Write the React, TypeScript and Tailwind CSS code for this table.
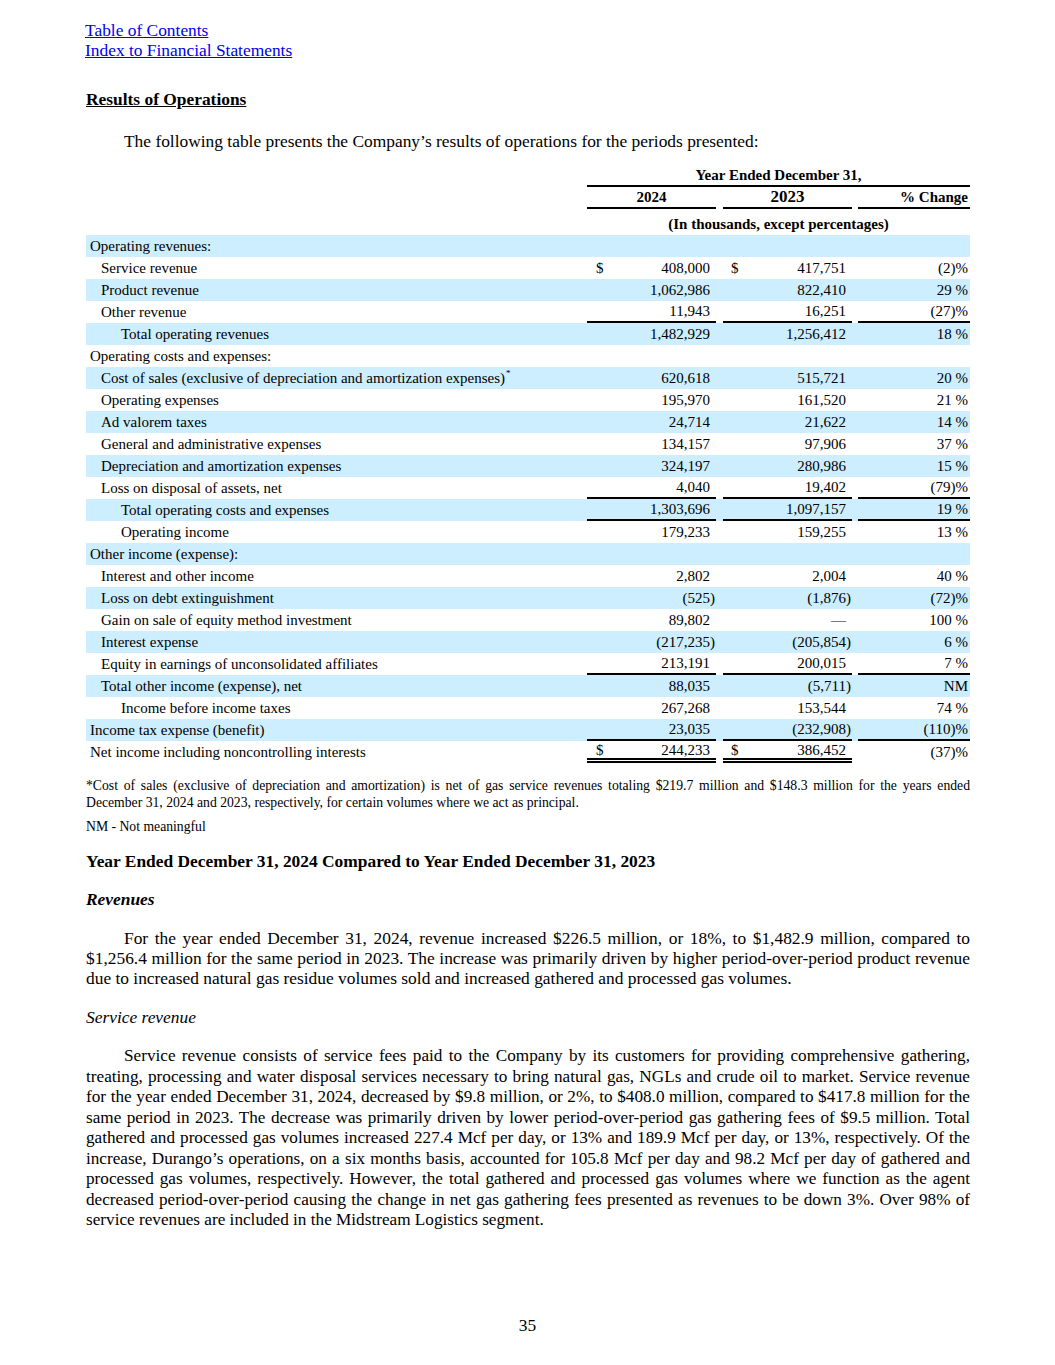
type Row = {
  label: string;
  lvl: 0 | 1 | 2;
  a?: string;
  b?: string;
  c?: string;
  dollar?: boolean;
  sup?: boolean;
  line?: boolean;
  double?: boolean;
};

const rows: Row[] = [
  { label: "Operating revenues:", lvl: 0 },
  { label: "Service revenue", lvl: 1, a: "408,000", b: "417,751", c: "(2)%", dollar: true },
  { label: "Product revenue", lvl: 1, a: "1,062,986", b: "822,410", c: "29 %" },
  { label: "Other revenue", lvl: 1, a: "11,943", b: "16,251", c: "(27)%", line: true },
  { label: "Total operating revenues", lvl: 2, a: "1,482,929", b: "1,256,412", c: "18 %" },
  { label: "Operating costs and expenses:", lvl: 0 },
  { label: "Cost of sales (exclusive of depreciation and amortization expenses)", lvl: 1, sup: true, a: "620,618", b: "515,721", c: "20 %" },
  { label: "Operating expenses", lvl: 1, a: "195,970", b: "161,520", c: "21 %" },
  { label: "Ad valorem taxes", lvl: 1, a: "24,714", b: "21,622", c: "14 %" },
  { label: "General and administrative expenses", lvl: 1, a: "134,157", b: "97,906", c: "37 %" },
  { label: "Depreciation and amortization expenses", lvl: 1, a: "324,197", b: "280,986", c: "15 %" },
  { label: "Loss on disposal of assets, net", lvl: 1, a: "4,040", b: "19,402", c: "(79)%", line: true },
  { label: "Total operating costs and expenses", lvl: 2, a: "1,303,696", b: "1,097,157", c: "19 %", line: true },
  { label: "Operating income", lvl: 2, a: "179,233", b: "159,255", c: "13 %" },
  { label: "Other income (expense):", lvl: 0 },
  { label: "Interest and other income", lvl: 1, a: "2,802", b: "2,004", c: "40 %" },
  { label: "Loss on debt extinguishment", lvl: 1, a: "(525)", b: "(1,876)", c: "(72)%" },
  { label: "Gain on sale of equity method investment", lvl: 1, a: "89,802", b: "—", c: "100 %" },
  { label: "Interest expense", lvl: 1, a: "(217,235)", b: "(205,854)", c: "6 %" },
  { label: "Equity in earnings of unconsolidated affiliates", lvl: 1, a: "213,191", b: "200,015", c: "7 %", line: true },
  { label: "Total other income (expense), net", lvl: 1, a: "88,035", b: "(5,711)", c: "NM" },
  { label: "Income before income taxes", lvl: 2, a: "267,268", b: "153,544", c: "74 %" },
  { label: "Income tax expense (benefit)", lvl: 0, a: "23,035", b: "(232,908)", c: "(110)%", line: true },
  { label: "Net income including noncontrolling interests", lvl: 0, a: "244,233", b: "386,452", c: "(37)%", dollar: true, double: true },
];

const indent = ["pl-[4px]", "pl-[15px]", "pl-[35px]"];

function Money({ v, dollar, pad, line, double }: { v?: string; dollar?: boolean; pad: string; line?: boolean; double?: boolean }) {
  const paren = v && v.endsWith(")");
  const num = v ? (paren ? v.slice(0, -1) : v) : "";
  const border = double ? "border-b-[5px] border-double border-black" : line ? "border-b-2 border-black" : "";
  return (
    <div className={`flex items-center justify-between h-[22px] ${pad} ${border}`}>
      <span>{dollar ? "$" : ""}</span>
      <span className="flex">
        <span>{num}</span>
        <span className="w-[6px]">{paren ? ")" : ""}</span>
      </span>
    </div>
  );
}

export default function App() {
  return (
    <div className="w-[1055px] h-[1365px] bg-white text-black px-[85px] pt-[20px] font-['Liberation_Serif',serif]">
      <div className="text-[17.4px] leading-[20px] text-[#0000ee] underline">
        <div>Table of Contents</div>
        <div>Index to Financial Statements</div>
      </div>
      <div className="mt-[29px] pl-[1px] text-[17.4px] leading-[20px] font-bold underline">Results of Operations</div>
      <p className="mt-[22px] pl-[39px] text-[17.4px] leading-[20px]">
        The following table presents the Company’s results of operations for the periods presented:
      </p>

      <div className="mt-[14px] pl-[1px] text-[15px]">
        <div className="grid grid-cols-[501px_383px]">
          <div />
          <div className="h-[22px] pt-[1px] border-b-2 border-black text-center font-bold leading-[19px]">Year Ended December 31,</div>
        </div>
        <div className="grid grid-cols-[501px_129px_7px_129px_6px_112px] font-bold">
          <div />
          <div className="h-[22px] border-b-2 border-black text-center leading-[20px]">2024</div>
          <div />
          <div className="h-[22px] border-b-2 border-black text-center text-[17px] leading-[20px]">2023</div>
          <div />
          <div className="h-[22px] border-b-2 border-black text-right pr-[2px] leading-[20px]">% Change</div>
        </div>
        <div className="grid grid-cols-[501px_383px] h-[26px]">
          <div />
          <div className="pt-[5px] text-center font-bold leading-[20px]">(In thousands, except percentages)</div>
        </div>

        {rows.map((r, i) => (
          <div
            key={r.label}
            className={`grid grid-cols-[501px_129px_7px_129px_6px_112px] leading-[20px] ${r.double ? "h-[27px]" : "h-[22px]"} ${i % 2 === 0 ? "bg-[#cceeff]" : ""}`}
          >
            <div className={`flex items-center h-[22px] ${indent[r.lvl]}`}>
              {r.label}
              {r.sup && <sup className="text-[9px] -top-[5px] ml-[1px]">*</sup>}
            </div>
            {r.a !== undefined ? (
              <>
                <Money v={r.a} dollar={r.dollar} pad="pl-[9px]" line={r.line} double={r.double} />
                <div />
                <Money v={r.b} dollar={r.dollar} pad="pl-[8px]" line={r.line} double={r.double} />
                <div />
                <div className={`flex items-center justify-end pr-[2px] h-[22px] ${r.line ? "border-b-2 border-black" : ""}`}>{r.c}</div>
              </>
            ) : null}
          </div>
        ))}
      </div>

      <p className="mt-[9px] pl-[1px] text-[13.7px] leading-[17px] text-justify">
        *Cost of sales (exclusive of depreciation and amortization) is net of gas service revenues totaling $219.7 million and $148.3 million for the years ended December 31, 2024 and 2023, respectively, for certain volumes where we act as principal.
      </p>
      <p className="mt-[7px] pl-[1px] text-[13.7px] leading-[17px]">NM - Not meaningful</p>

      <div className="mt-[16px] pl-[1px] text-[17.4px] leading-[20px] font-bold">
        Year Ended December 31, 2024 Compared to Year Ended December 31, 2023
      </div>
      <div className="mt-[18px] pl-[1px] text-[17.4px] leading-[20px] font-bold italic">Revenues</div>
      <p className="mt-[19px] pl-[1px] text-[17.4px] leading-[20px] text-justify indent-[38px]">
        For the year ended December 31, 2024, revenue increased $226.5 million, or 18%, to $1,482.9 million, compared to $1,256.4 million for the same period in 2023. The increase was primarily driven by higher period-over-period product revenue due to increased natural gas residue volumes sold and increased gathered and processed gas volumes.
      </p>
      <div className="mt-[19px] pl-[1px] text-[17.4px] leading-[20px] italic">Service revenue</div>
      <p className="mt-[19px] pl-[1px] text-[17.2px] leading-[20.5px] text-justify indent-[38px]">
        Service revenue consists of service fees paid to the Company by its customers for providing comprehensive gathering, treating, processing and water disposal services necessary to bring natural gas, NGLs and crude oil to market. Service revenue for the year ended December 31, 2024, decreased by $9.8 million, or 2%, to $408.0 million, compared to $417.8 million for the same period in 2023. The decrease was primarily driven by lower period-over-period gas gathering fees of $9.5 million. Total gathered and processed gas volumes increased 227.4 Mcf per day, or 13% and 189.9 Mcf per day, or 13%, respectively. Of the increase, Durango’s operations, on a six months basis, accounted for 105.8 Mcf per day and 98.2 Mcf per day of gathered and processed gas volumes, respectively. However, the total gathered and processed gas volumes where we function as the agent decreased period-over-period causing the change in net gas gathering fees presented as revenues to be down 3%. Over 98% of service revenues are included in the Midstream Logistics segment.
      </p>

      <div className="mt-[84px] text-center text-[17.4px] leading-[20px]">35</div>
    </div>
  );
}
